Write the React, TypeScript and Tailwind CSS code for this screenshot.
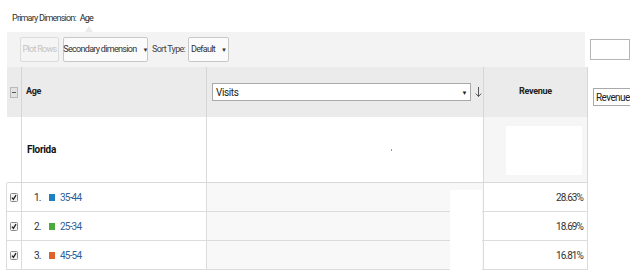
import React from "react";

const font = { fontFamily: 'Roboto, "Liberation Sans", Arial, sans-serif' };

function Check() {
  return (
    <svg width="8" height="9" viewBox="0 0 8 9" className="block">
      <rect x="0.5" y="0.5" width="7" height="8" rx="1" fill="#f4f4f4" stroke="#8a8a8a" />
      <path d="M2 4.6 L3.4 6.4 L6 2.2" fill="none" stroke="#222" strokeWidth="1.3" />
    </svg>
  );
}

function DownArrow() {
  return (
    <svg width="7" height="12" viewBox="0 0 7 12" className="block">
      <path d="M3.5 1 V10.5 M0.8 7.6 L3.5 10.5 L6.2 7.6" fill="none" stroke="#555" strokeWidth="1" />
    </svg>
  );
}

const rows = [
  { n: "1.", color: "#1f7fc0", label: "35-44", pct: "28.63%" },
  { n: "2.", color: "#4aaa3c", label: "25-34", pct: "18.69%" },
  { n: "3.", color: "#e0622b", label: "45-54", pct: "16.81%" },
];

export default function App() {
  return (
    <div className="relative w-[630px] h-[274px] bg-white overflow-hidden text-[#222] whitespace-nowrap" style={font}>
      {/* Primary dimension */}
      <div className="h-[32px] pl-[12px] pt-[12px] text-[9px] leading-[12px] tracking-[-0.8px] flex gap-[4px]">
        <span className="text-[#333]">Primary Dimension:</span>
        <span className="relative text-[#222]">
          Age
          <span className="absolute left-[5px] top-[14px] w-0 h-0 border-l-[4px] border-r-[4px] border-b-[6px] border-l-transparent border-r-transparent border-b-[#ebebeb]" />
        </span>
      </div>

      {/* Toolbar */}
      <div className="flex items-center">
        <div className="ml-[7px] w-[583px] h-[35px] bg-[#f3f3f3] flex items-center pl-[13px] gap-[4px] text-[9px] tracking-[-0.7px]">
          <div className="h-[25px] w-[39px] border border-[#dcdcdc] rounded-[2px] bg-[#f5f5f5] flex items-center justify-center text-[#c4c4c4]">
            Plot Rows
          </div>
          <div className="h-[25px] w-[85px] border border-[#c8c8c8] rounded-[2px] bg-[#fbfbfb] flex items-center justify-center gap-[6px] text-[#333]">
            <span>Secondary dimension</span>
            <span className="text-[6px]">▼</span>
          </div>
          <span className="text-[#444] -mr-[1px]">Sort Type:</span>
          <div className="h-[25px] w-[41px] border border-[#c8c8c8] rounded-[2px] bg-[#fbfbfb] flex items-center justify-center gap-[6px] text-[#333]">
            <span>Default</span>
            <span className="text-[6px]">▼</span>
          </div>
        </div>
        <div className="ml-[5px] w-[40px] h-[21px] border border-[#b5b5b5] bg-white" />
      </div>

      {/* Table */}
      <div className="ml-[7px] w-[581px] grid grid-cols-[15px_185px_277px_104px]">
        {/* Header */}
        <div className="h-[50px] bg-[#ebebeb] border-r border-[#d6d6d6] flex items-center justify-center">
          <div className="w-[8px] h-[11px] border border-[#b8b8b8] bg-[#e2e2e2] flex items-center justify-center">
            <div className="w-[4px] h-[1px] bg-[#555]" />
          </div>
        </div>
        <div className="h-[50px] bg-[#ebebeb] border-r border-[#d6d6d6] flex items-center pl-[4px] text-[9px] font-bold tracking-[-0.4px] text-[#222]">
          Age
        </div>
        <div className="h-[50px] bg-[#ebebeb] border-r border-[#d6d6d6] flex items-center pl-[5px] gap-[4px]">
          <div className="w-[259px] h-[18px] border border-[#a9a9a9] bg-white flex items-center justify-between pl-[3px] pr-[3px] text-[10px] tracking-[-0.4px] text-[#222]">
            <span>Visits</span>
            <span className="text-[6px]">▼</span>
          </div>
          <DownArrow />
        </div>
        <div className="h-[50px] bg-[#ebebeb] border-r border-[#d6d6d6] flex items-center justify-center text-[9px] font-bold tracking-[-0.3px] text-[#222]">
          Revenue
        </div>

        {/* Florida row */}
        <div className="h-[66px] border-r border-b border-[#d9d9d9]" />
        <div className="h-[66px] border-r border-b border-[#d9d9d9] flex items-center pl-[5px] text-[10px] font-bold tracking-[-0.3px] text-[#111]">
          Florida
        </div>
        <div className="h-[66px] border-r border-b border-[#d9d9d9] flex items-center">
          <div className="ml-[184px] w-[1px] h-[2px] bg-[#999]" />
        </div>
        <div className="h-[66px] border-r border-b border-[#d9d9d9] bg-[#f6f6f6] pl-[22px] pt-[9px]">
          <div className="w-[76px] h-[49px] bg-white" />
        </div>

        {/* Data rows */}
        {rows.map((r) => (
          <React.Fragment key={r.n}>
            <div className="h-[29px] border-l border-r border-b border-[#dcdcdc] flex items-center justify-center -ml-px">
              <Check />
            </div>
            <div className="h-[29px] border-r border-b border-[#dcdcdc] flex items-center pl-[12px] text-[10px] tracking-[-0.8px]">
              <span className="w-[15px] text-[#333]">{r.n}</span>
              <span className="w-[6px] h-[7px] mr-[5px]" style={{ backgroundColor: r.color }} />
              <span className="text-[#2d5f99]">{r.label}</span>
            </div>
            <div className="h-[29px] border-r border-b border-[#dcdcdc] bg-[#f8f8f8]" />
            <div className="h-[29px] border-r border-b border-[#dcdcdc] flex items-center justify-end pr-[4px] text-[10px] tracking-[-0.9px] text-[#333]">
              {r.pct}
            </div>
          </React.Fragment>
        ))}
      </div>

      {/* redaction block over visits column */}
      <div className="absolute left-[450px] top-[190px] w-[32px] h-[84px] bg-white" />

      {/* Revenue select on right */}
      <div className="absolute left-[593px] top-[88px] w-[45px] h-[18px] border border-[#a9a9a9] bg-white flex items-center pl-[2px] text-[10px] tracking-[-0.6px] text-[#222]">
        Revenue
      </div>
    </div>
  );
}
